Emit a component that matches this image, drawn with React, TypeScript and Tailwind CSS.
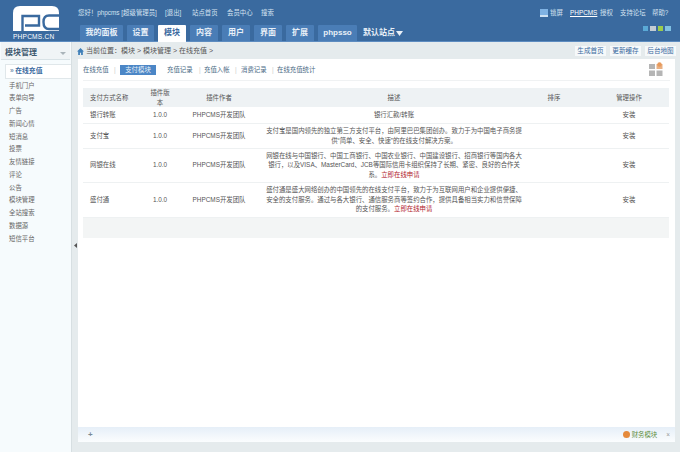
import React from "react";

const tabs: [string, string][] = [
  ["我的面板", "w-[43px]"],
  ["设置", "w-[27px]"],
  ["模块", "w-[28px]"],
  ["内容", "w-[28px]"],
  ["用户", "w-[28px]"],
  ["界面", "w-[28px]"],
  ["扩展", "w-[28px]"],
  ["phpsso", "w-[39px]"],
];

const side = ["手机门户", "表单向导", "广告", "新闻心情", "短消息", "投票", "友情链接", "评论", "公告", "模块管理", "全站搜索", "数据源", "短信平台"];

const Red = ({ children }: { children: React.ReactNode }) => <span className="text-[#b0202a]">{children}</span>;

const rows: { name: string; desc: React.ReactNode; h: string }[] = [
  { name: "银行转账", desc: "银行汇款/转账", h: "h-[16px]" },
  { name: "支付宝", desc: "支付宝是国内领先的独立第三方支付平台，由阿里巴巴集团创办。致力于为中国电子商务提供“简单、安全、快速”的在线支付解决方案。", h: "h-[25px]" },
  { name: "网银在线", desc: <>网银在线与中国银行、中国工商银行、中国农业银行、中国建设银行、招商银行等国内各大银行，以及VISA、MasterCard、JCB等国际信用卡组织保持了长期、紧密、良好的合作关系。<Red>立即在线申请</Red></>, h: "h-[34px]" },
  { name: "盛付通", desc: <>盛付通是盛大网络创办的中国领先的在线支付平台，致力于为互联网用户和企业提供便捷、安全的支付服务。通过与各大银行、通信服务商等签约合作，提供具备相当实力和信誉保障的支付服务。<Red>立即在线申请</Red></>, h: "h-[35px]" },
];

function Logo() {
  return (
    <div className="w-[78px] flex flex-col items-start pl-[13px] pt-[6px]">
      <svg width="46" height="25" viewBox="0 0 46 25">
        <path d="M7 0H39Q46 0 46 7V25H0V7Q0 0 7 0Z" fill="#fff" />
        <path d="M9.5 25V10H26V19.5H12" fill="none" stroke="#3a6a9f" strokeWidth="2.4" />
        <path d="M46 9.5H36Q30.5 9.5 30.5 16Q30.5 23 36 23H46" fill="none" stroke="#3a6a9f" strokeWidth="2.4" />
      </svg>
      <div className="mt-[1px] text-[6.6px] leading-[9px] text-white tracking-[0.2px] whitespace-nowrap">PHPCMS.CN</div>
    </div>
  );
}

export default function App() {
  return (
    <div className="w-[680px] h-[452px] overflow-hidden flex flex-col bg-[#e5ebed] text-[6.4px] text-[#555] [font-family:'Liberation_Sans','Noto_Sans_CJK_SC',sans-serif]">
      {/* Header */}
      <header className="h-[42px] flex shrink-0 bg-[#3a6a9f] border-b border-[#5d8cc0]">
        <Logo />
        <div className="flex-1 flex flex-col">
          <div className="h-[26px] flex items-center text-[#d5e3f1] pt-[1px] whitespace-nowrap">
            <span className="w-[87px]">您好！phpcms [超级管理员]</span>
            <span className="w-[27px]">[退出]</span>
            <span className="w-[35px]">站点首页</span>
            <span className="w-[34px]">会员中心</span>
            <span className="w-[280px]">搜索</span>
            <span className="w-[8px] h-[8px] bg-[#7fb2e3] border-b-2 border-[#cfe2f3] ml-[-1px] mr-[2px]" />
            <span className="w-[20px]">锁屏</span>
            <span className="w-[30px] underline text-white">PHPCMS</span>
            <span className="w-[20px]">授权</span>
            <span className="w-[32px]">支持论坛</span>
            <span>帮助?</span>
          </div>
          <div className="flex-1 flex items-end gap-[4px] pl-[2px]">
            {tabs.map(([t, w]) => {
              const active = t === "模块";
              return (
                <div
                  key={t}
                  className={`${w} flex items-center justify-center rounded-t-[1px] text-[8px] font-bold ${active ? "h-[17px] -mb-[1px] pb-[1px] bg-white text-[#3a6a9f]" : "h-[16px] bg-[#4a7db6] text-[#e9f0f8]"}`}
                >
                  {t}
                </div>
              );
            })}
            <div className="h-[16px] ml-[2px] flex items-center text-[8px] font-bold text-[#e9f0f8] whitespace-nowrap">
              默认站点
              <svg width="7" height="5" viewBox="0 0 7 5" className="ml-[1px]">
                <path d="M0 0H7L3.5 5Z" fill="#e9f0f8" />
              </svg>
            </div>
            <div className="ml-auto mr-[9px] mb-[10px] flex gap-[2px]">
              <span className="w-[5px] h-[5px] bg-[#5aa9d6]" />
              <span className="w-[6px] h-[5px] bg-[#c3ccd4]" />
              <span className="w-[5px] h-[5px] bg-[#9ccc4b]" />
              <span className="w-[6px] h-[5px] bg-[#7fc0e2]" />
            </div>
          </div>
        </div>
      </header>

      <div className="flex-1 flex min-h-0">
        {/* Sidebar */}
        <aside className="w-[71px] shrink-0 bg-[#f6fbfd] flex flex-col">
          <div className="h-[18px] mx-[1px] flex items-center justify-between pt-[5px] pl-[4px] pr-[4px] border-b border-[#d8e2e6] bg-[#f0f4f6]">
            <span className="text-[8px] font-bold text-[#3f5a70]">模块管理</span>
            <svg width="6" height="4" viewBox="0 0 6 4"><path d="M0 1H6L3 4Z" fill="#aab4ba" /></svg>
          </div>
          <div className="mt-[4px] ml-[5px] h-[15px] bg-white border border-r-0 border-[#e0e7ea] flex items-center pl-[4px] font-bold text-[#3a6a9f] text-[6.8px] whitespace-nowrap">
            <span className="text-[#7a98b3] mr-[1.5px]">»</span>在线充值
          </div>
          <ul className="mt-[0.5px] pl-[9px]">
            {side.map((s) => (
              <li key={s} className="h-[12.75px] leading-[12.75px] text-[#666]">{s}</li>
            ))}
          </ul>
        </aside>

        {/* Splitter */}
        <div className="w-[7px] shrink-0 flex items-center justify-center border-l border-[#d7dfe2]">
          <svg width="3" height="5" viewBox="0 0 3 5" className="mb-[3px]"><path d="M3 0V5L0 2.5Z" fill="#555" /></svg>
        </div>

        {/* Content */}
        <main className="flex-1 min-w-0 flex flex-col pr-[5px] pb-[10px]">
          <div className="h-[17px] shrink-0 flex items-center pt-[1px]">
            <svg width="7" height="7" viewBox="0 0 12 12" className="mr-[2px] ml-[-1px]">
              <path d="M6 0L12 6H10V12H7V8H5V12H2V6H0Z" fill="#3f7fb8" />
            </svg>
            <span className="text-[7px] text-[#555]">当前位置：模块 &gt; 模块管理 &gt; 在线充值 &gt;</span>
            <div className="ml-auto flex gap-[4px] -mr-[1px]">
              {["生成首页", "更新缓存", "后台地图"].map((b) => (
                <span key={b} className="w-[31px] h-[10px] bg-[#f6f9fa] flex items-center justify-center text-[#3a6a9f] text-[6.6px]">{b}</span>
              ))}
            </div>
          </div>

          <div className="flex-1 min-h-0 bg-white flex flex-col">
            <div className="flex-1 px-[5px]">
              <nav className="h-[22px] flex items-center border-b border-[#f0f2f3] text-[#4a6a85] whitespace-nowrap">
                <span className="w-[31px]">在线充值</span>
                <span className="w-[6px] text-[#ccc]">|</span>
                <span className="w-[36px] h-[10px] bg-[#4b86c6] text-[#e9f1f9] flex items-center justify-center mr-[11px]">支付模块</span>
                <span className="w-[32px]">充值记录</span>
                <span className="w-[5px] text-[#ccc]">|</span>
                <span className="w-[31px]">充值入帐</span>
                <span className="w-[6px] text-[#ccc]">|</span>
                <span className="w-[31px]">消费记录</span>
                <span className="w-[5px] text-[#ccc]">|</span>
                <span>在线充值统计</span>
                <svg width="14" height="14" viewBox="0 0 14 14" className="ml-auto mr-[7px] mt-[-1px]">
                  <rect x="0" y="2" width="6" height="5" fill="#b5b5b5" />
                  <rect x="7.5" y="2" width="6" height="5" fill="#e9b184" />
                  <rect x="0" y="8.5" width="6" height="5.5" fill="#b5b5b5" />
                  <rect x="7.5" y="8.5" width="6" height="5.5" fill="#b5b5b5" />
                  <circle cx="10.5" cy="2.5" r="2.2" fill="#e89a5c" />
                </svg>
              </nav>

              <table className="mt-[7px] w-[586px] table-fixed border-collapse leading-[9.5px]">
                <colgroup>
                  <col className="w-[62px]" />
                  <col className="w-[30px]" />
                  <col className="w-[88px]" />
                  <col className="w-[262px]" />
                  <col className="w-[58px]" />
                  <col className="w-[86px]" />
                </colgroup>
                <thead>
                  <tr className="h-[19px] bg-[#eef2f4] font-normal">
                    <th className="font-normal text-left pl-[7px]">支付方式名称</th>
                    <th className="font-normal px-[4px]">插件版本</th>
                    <th className="font-normal">插件作者</th>
                    <th className="font-normal">描述</th>
                    <th className="font-normal">排序</th>
                    <th className="font-normal pl-[6px]">管理操作</th>
                  </tr>
                </thead>
                <tbody>
                  {rows.map((r) => (
                    <tr key={r.name} className={`${r.h} border-b border-[#eef1f2]`}>
                      <td className="pl-[7px]">{r.name}</td>
                      <td className="text-center">1.0.0</td>
                      <td className="text-center">PHPCMS开发团队</td>
                      <td className="text-center px-[3px]">{r.desc}</td>
                      <td />
                      <td className="text-center pl-[6px]">安装</td>
                    </tr>
                  ))}
                </tbody>
                <tfoot>
                  <tr className="h-[21px] bg-[#f3f5f5]"><td colSpan={6} /></tr>
                </tfoot>
              </table>
            </div>

            <footer className="h-[15px] shrink-0 flex items-center bg-gradient-to-b from-[#e6eff8] to-[#fbfdfe] pl-[10px] pr-[5px]">
              <span className="text-[8px] leading-none text-[#7a8a94] font-bold">+</span>
              <span className="ml-auto w-[7px] h-[7px] rounded-full bg-[#e58a3c] mr-[2px]" />
              <span className="text-[#5f8f3f] mr-[9px]">财务模块</span>
              <span className="text-[#999]">×</span>
            </footer>
          </div>
        </main>
      </div>
    </div>
  );
}
